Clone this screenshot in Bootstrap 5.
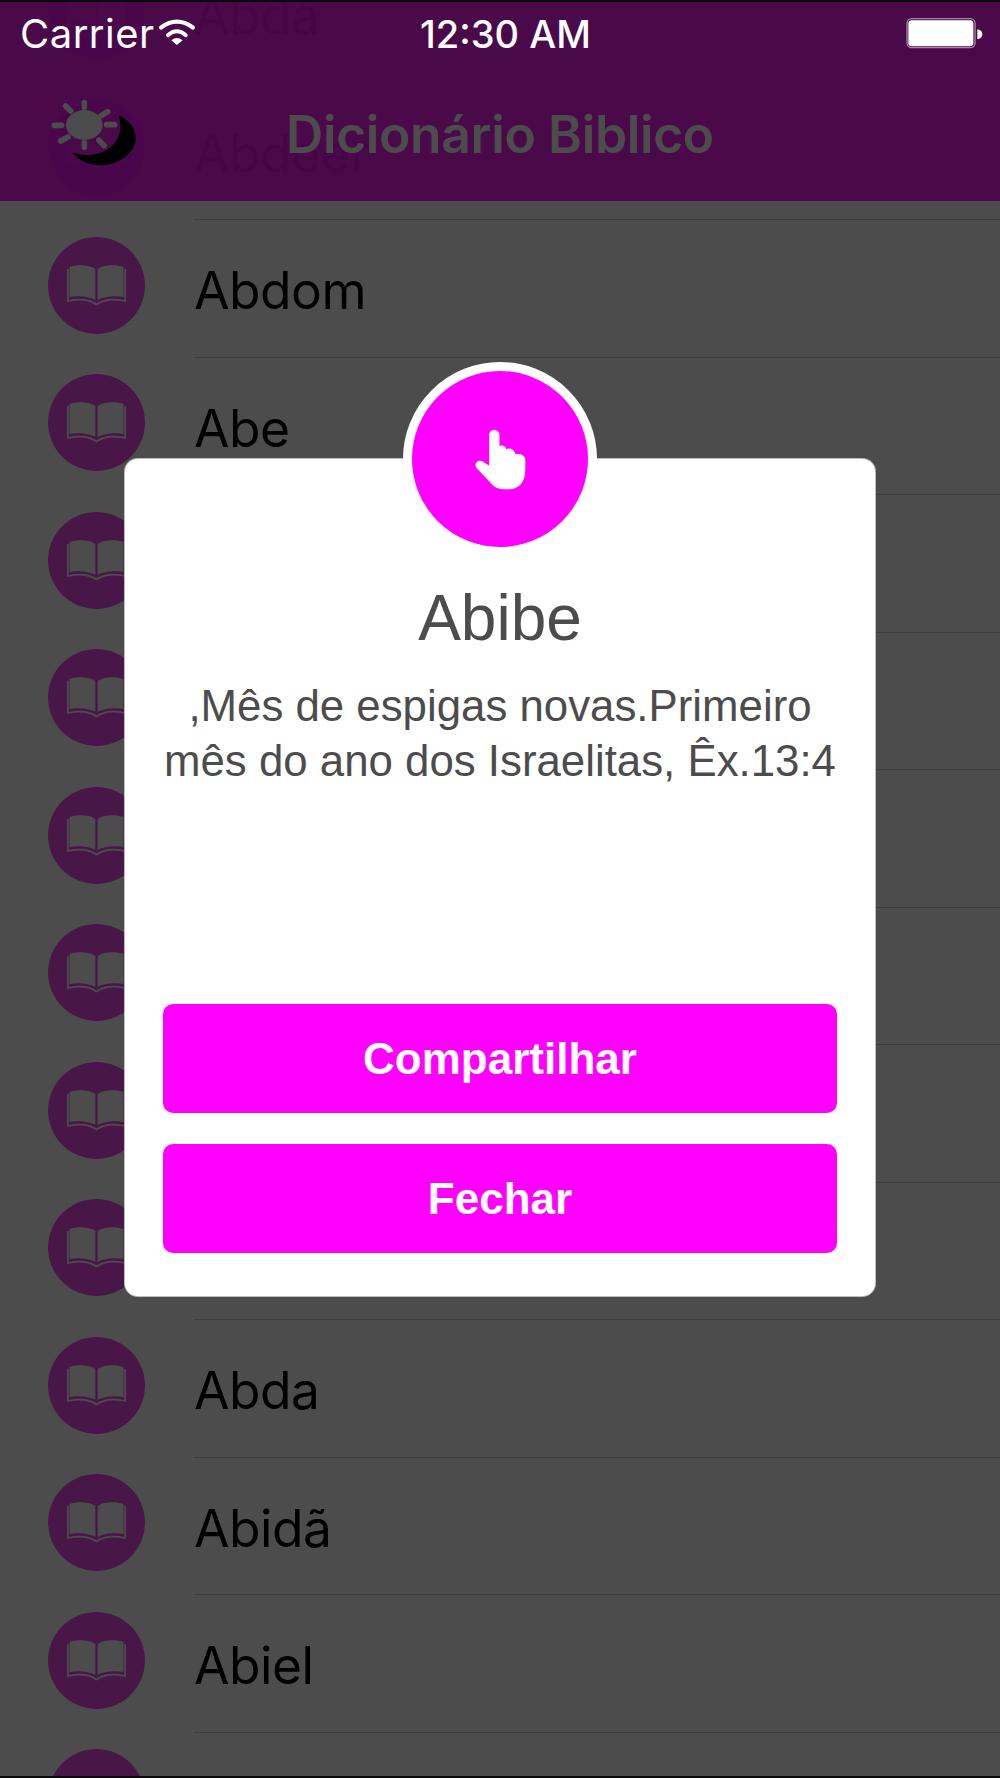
<!DOCTYPE html>
<html lang="pt-BR">

<head>
    <meta charset="UTF-8">
    <meta name="viewport" content="width=device-width, initial-scale=1.0">
    <title>Dicionário Biblico</title>
    <link href="https://cdn.jsdelivr.net/npm/bootstrap@5.3.3/dist/css/bootstrap.min.css" rel="stylesheet">
    <style>
        html, body { height: 100%; overflow: hidden; background: #000; }
        .phone-screen { height: 1778px; overflow: hidden; position: relative; border-top: 2px solid #0a0a0a; border-bottom: 2px solid #0a0a0a; background: #fff; font-family: Inter, "Liberation Sans", sans-serif; }
        .word-list { margin-top: -57px; }
        .word-row { height: 137.5px; padding-left: 48px; }
        .word-icon { width: 97px; height: 97px; background: #f04ff0; flex-shrink: 0; margin-bottom: 7px; }
        .word-body { margin-left: 49px; height: 100%; border-bottom: 1.5px solid #d0d0d0; font-size: 51.5px; color: #000; letter-spacing: -.5px; padding-top: 5px; }
        .app-bar { position: absolute; top: 0; left: 0; right: 0; height: 199px; background: rgba(248, 20, 248, .94); }
        .app-title { font-size: 51.5px; line-height: 78px; font-weight: 600; color: #fff; padding-top: 93px; letter-spacing: -.3px; }
        .day-night { position: absolute; left: 40px; top: 88px; }
        .backdrop-dim { position: absolute; inset: 0; background: rgba(0, 0, 0, .7); }
        .status-line { position: absolute; top: 0; left: 0; right: 0; height: 56px; color: #fff; }
        .status-carrier { position: absolute; left: 20px; top: 11px; line-height: 42px; font-size: 40px; letter-spacing: .5px; }
        .status-wifi { position: absolute; left: 157px; top: 15px; }
        .status-time { font-size: 38px; line-height: 42px; padding-top: 11px; padding-left: 11px; font-weight: 500; }
        .status-battery { position: absolute; left: 905px; top: 15px; }
        .alert-box { position: absolute; left: 125px; top: 457px; width: 750px; height: 837px; background: #fff; border-radius: 13px; padding: 0 38px 43px; font-family: "Liberation Sans", Arial, sans-serif; color: #4c4c4c; box-shadow: 0 0 0 1px #bdbdbd; }
        .alert-badge { position: absolute; left: 278px; top: -97px; width: 194px; height: 194px; background: #f0f; border: 9px solid #fff; }
        .alert-title { font-size: 64px; line-height: 70px; margin: 124px 0 0; font-weight: 400; }
        .alert-text { font-size: 43.8px; line-height: 55px; margin: 25px -5px 0; }
        .alert-actions { gap: 31px; }
        .alert-btn { height: 109px; background: #f0f; border: 0; border-radius: 10px; color: #fff; font-size: 44px; font-weight: 700; }
        .alert-btn:hover { background: #f0f; color: #fff; }
    </style>
</head>

<body>
    <svg width="0" height="0" class="d-block position-absolute">
        <symbol id="bookIcon" viewBox="0 0 59 41">
            <path fill="#fff" d="M2.5 2C10-.5 22-.5 28.3 4V35C22 31 10 30.5 2.5 32Z"/>
            <path fill="#fff" d="M56.5 2C49-.5 37-.5 30.7 4V35C37 31 49 30.5 56.5 32Z"/>
            <path fill="none" stroke="#fff" stroke-width="1.7" d="M.9 4V36C10 34 22 34 29.5 39.5C37 34 49 34 58.1 36V4"/>
        </symbol>
    </svg>

    <div class="phone-screen">
        <div class="word-list">
            <div class="word-row d-flex align-items-center"><span class="word-icon rounded-circle d-flex align-items-center justify-content-center"><svg width="59" height="41"><use href="#bookIcon"/></svg></span><div class="word-body flex-grow-1 d-flex align-items-center">Abda</div></div>
            <div class="word-row d-flex align-items-center"><span class="word-icon rounded-circle d-flex align-items-center justify-content-center"><svg width="59" height="41"><use href="#bookIcon"/></svg></span><div class="word-body flex-grow-1 d-flex align-items-center">Abdeer</div></div>
            <div class="word-row d-flex align-items-center"><span class="word-icon rounded-circle d-flex align-items-center justify-content-center"><svg width="59" height="41"><use href="#bookIcon"/></svg></span><div class="word-body flex-grow-1 d-flex align-items-center">Abdom</div></div>
            <div class="word-row d-flex align-items-center"><span class="word-icon rounded-circle d-flex align-items-center justify-content-center"><svg width="59" height="41"><use href="#bookIcon"/></svg></span><div class="word-body flex-grow-1 d-flex align-items-center">Abe</div></div>
            <div class="word-row d-flex align-items-center"><span class="word-icon rounded-circle d-flex align-items-center justify-content-center"><svg width="59" height="41"><use href="#bookIcon"/></svg></span><div class="word-body flex-grow-1 d-flex align-items-center"></div></div>
            <div class="word-row d-flex align-items-center"><span class="word-icon rounded-circle d-flex align-items-center justify-content-center"><svg width="59" height="41"><use href="#bookIcon"/></svg></span><div class="word-body flex-grow-1 d-flex align-items-center"></div></div>
            <div class="word-row d-flex align-items-center"><span class="word-icon rounded-circle d-flex align-items-center justify-content-center"><svg width="59" height="41"><use href="#bookIcon"/></svg></span><div class="word-body flex-grow-1 d-flex align-items-center"></div></div>
            <div class="word-row d-flex align-items-center"><span class="word-icon rounded-circle d-flex align-items-center justify-content-center"><svg width="59" height="41"><use href="#bookIcon"/></svg></span><div class="word-body flex-grow-1 d-flex align-items-center"></div></div>
            <div class="word-row d-flex align-items-center"><span class="word-icon rounded-circle d-flex align-items-center justify-content-center"><svg width="59" height="41"><use href="#bookIcon"/></svg></span><div class="word-body flex-grow-1 d-flex align-items-center"></div></div>
            <div class="word-row d-flex align-items-center"><span class="word-icon rounded-circle d-flex align-items-center justify-content-center"><svg width="59" height="41"><use href="#bookIcon"/></svg></span><div class="word-body flex-grow-1 d-flex align-items-center"></div></div>
            <div class="word-row d-flex align-items-center"><span class="word-icon rounded-circle d-flex align-items-center justify-content-center"><svg width="59" height="41"><use href="#bookIcon"/></svg></span><div class="word-body flex-grow-1 d-flex align-items-center">Abda</div></div>
            <div class="word-row d-flex align-items-center"><span class="word-icon rounded-circle d-flex align-items-center justify-content-center"><svg width="59" height="41"><use href="#bookIcon"/></svg></span><div class="word-body flex-grow-1 d-flex align-items-center">Abidã</div></div>
            <div class="word-row d-flex align-items-center"><span class="word-icon rounded-circle d-flex align-items-center justify-content-center"><svg width="59" height="41"><use href="#bookIcon"/></svg></span><div class="word-body flex-grow-1 d-flex align-items-center">Abiel</div></div>
            <div class="word-row d-flex align-items-center"><span class="word-icon rounded-circle d-flex align-items-center justify-content-center"><svg width="59" height="41"><use href="#bookIcon"/></svg></span><div class="word-body flex-grow-1 d-flex align-items-center"></div></div>
        </div>

        <div class="app-bar text-center">
            <div class="app-title">Dicionário Biblico</div>
            <svg class="day-night" width="110" height="90" viewBox="0 0 330 270">
                <path fill="#000" d="M236 76C270 90 290 120 287 150C282 195 230 226 180 226C145 226 115 210 96 187C130 200 170 198 200 180C235 160 250 120 236 76Z"/>
                <ellipse cx="133" cy="105" rx="55" ry="45" fill="#fff"/>
                <path fill="none" stroke="#fff" stroke-width="17" stroke-linecap="round" d="M133 38V52M133 158V172M43 106H65M200 104H224M77 48L92 63M203 65L184 77M62 153L84 141M177 151L192 167"/>
            </svg>
        </div>

        <div class="backdrop-dim"></div>

        <div class="status-line text-center">
            <span class="status-carrier">Carrier</span>
            <svg class="status-wifi" width="40" height="30" viewBox="465 50 125 92">
                <path fill="none" stroke="#fff" stroke-width="13" stroke-linecap="round" d="M478 82Q527 45 577 82"/>
                <path fill="none" stroke="#fff" stroke-width="12" stroke-linecap="round" d="M499 106Q527 82 555 106"/>
                <path fill="#fff" d="M510 122Q527 108 545 122L527 137Z"/>
            </svg>
            <div class="status-time">12:30 AM</div>
            <svg class="status-battery" width="80" height="33" viewBox="45 35 240 100">
                <rect x="50" y="40" width="206" height="88" rx="14" fill="none" stroke="#a987a9" stroke-width="4"/>
                <rect x="54" y="45" width="197" height="79" rx="10" fill="#fff"/>
                <path fill="#fff" d="M263 72C274 74 278 80 278 87C278 94 274 100 263 102Z"/>
            </svg>
        </div>

        <div class="alert-box text-center d-flex flex-column">
            <div class="alert-badge rounded-circle d-flex align-items-center justify-content-center">
                <svg width="51" height="61" viewBox="285 265 152 182"><path fill="#fff" d="M327 283a15.500 15.500 0 0 1 31 0V318C360 312 376 312 379 326C385 320 400 322 406 340C415 338 434 340 435 356V385C435 420 420 445 385 445H370C350 445 338 435 328 422L290 382C282 374 288 360 300 360C306 360 315 366 327 375Z"/></svg>
            </div>
            <h2 class="alert-title">Abibe</h2>
            <p class="alert-text flex-grow-1">,Mês de espigas novas.Primeiro mês do ano dos Israelitas, Êx.13:4</p>
            <div class="d-grid alert-actions">
                <button type="button" class="btn alert-btn">Compartilhar</button>
                <button type="button" class="btn alert-btn">Fechar</button>
            </div>
        </div>
    </div>

    <script src="https://cdn.jsdelivr.net/npm/bootstrap@5.3.3/dist/js/bootstrap.bundle.min.js"></script>
</body>

</html>
